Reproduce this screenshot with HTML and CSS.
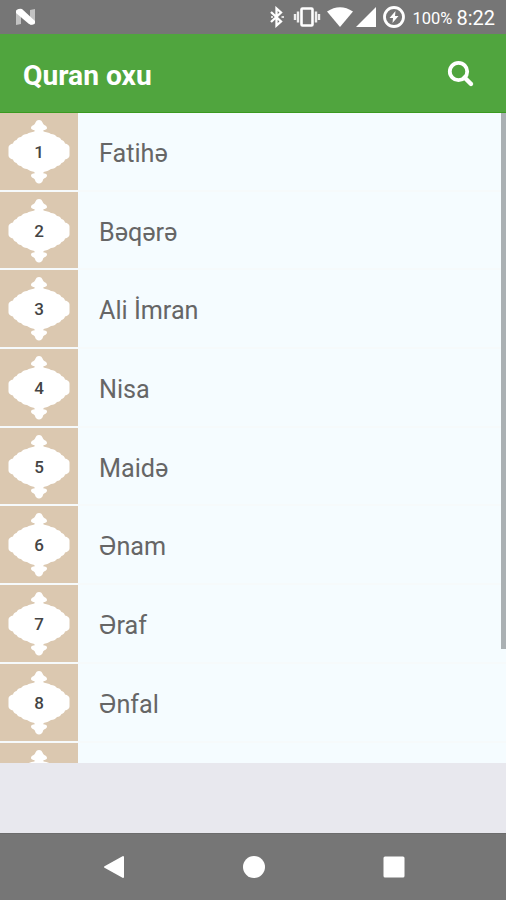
FILE: index.html
```html
<!DOCTYPE html>
<html lang="az">
<head>
  <meta charset="UTF-8">
  <meta name="viewport" content="width=device-width, initial-scale=1.0">
  <title>Quran oxu</title>
  <link rel="stylesheet" href="styles.css">
</head>
<body>

  <!-- Shared ornament shape -->
  <svg class="defs" width="0" height="0">
    <symbol id="ornament" viewBox="0 0 78 77">
      <path d="M39 7C41 7 42 8 43 10.500C44 12.500 47 12.500 47 15C47 16.500 45 17 43.500 17V18.500C46 19 49 19.500 51 21C53.500 21 55.500 22 57 24C59 24 60.500 25 61.500 27C63.500 27.500 64.500 28.500 65 30.500C67.500 31 69.500 32.500 69.500 34.500V42.500C69.500 44.500 67.500 46 65 46.500C64.500 48.500 63.500 49.500 61.500 50C60.500 52 59 53 57 53C55.500 55 53.500 56 51 56C49 57.500 46 58.500 43.500 59V60.500C45.500 60.500 47 61 47 62.500C47 65 43.500 65 43 67C42.500 69 41 70.500 39 70.500S35.500 69 35 67C34.500 65 31 65 31 62.500C31 61 32.500 60.500 34.500 60.500V59C32 58.500 29 57.500 27 56C24.500 56 22.500 55 21 53C19 53 17.500 52 16.500 50C14.500 49.500 13.500 48.500 13 46.500C10.500 46 8.500 44.500 8.500 42.500V34.500C8.500 32.500 10.500 31 13 30.500C13.500 28.500 14.500 27.500 16.500 27C17.500 25 19 24 21 24C22.500 22 24.500 21 27 21C29 19.500 32 19 34.500 18.500V17C33 17 31 16.500 31 15C31 12.500 34 12.500 35 10.500C36 8 37 7 39 7Z" fill="#fff"/>
    </symbol>
  </svg>

  <div class="status-bar">
    <svg class="logo" width="22" height="18" viewBox="0 0 22 18">
      <path d="M1 2L6 1V16L1 17ZM15 2L20 1V16L15 17Z" fill="#c2c2c2"/>
      <path d="M1 3Q3 0 7 1L20 13V15Q18 18 14 16L1 5Z" fill="#fff"/>
    </svg>
    <div class="status-icons">
      <svg class="bluetooth" width="16" height="22" viewBox="0 0 16 22">
        <path d="M2 6L12 15.500L7.500 19.500V2.500L12 6.500L2 16" fill="none" stroke="#fff" stroke-width="2.300"/>
        <path d="M12.500 11H15M2 11H4" stroke="#ddd" stroke-width="2"/>
      </svg>
      <svg class="vibrate" width="28" height="22" viewBox="0 0 28 22">
        <rect x="8.500" y="2.500" width="11" height="17" rx="1" fill="none" stroke="#fff" stroke-width="2.600"/>
        <path d="M5 5.500V16.500M2 8V14M23 5.500V16.500M26 8V14" stroke="#eee" stroke-width="2.400"/>
      </svg>
      <svg class="wifi" width="26" height="20" viewBox="0 0 26 20">
        <path d="M0 4.500Q13 -4 26 4.500L13 20Z" fill="#fff"/>
      </svg>
      <svg class="signal" width="20" height="20" viewBox="0 0 20 20">
        <path d="M20 0V20H0Z" fill="#fff"/>
      </svg>
      <svg class="battery" width="22" height="22" viewBox="0 0 22 22">
        <circle cx="11" cy="11" r="9.500" fill="none" stroke="#fff" stroke-width="2.800"/>
        <path d="M12.500 5L6.500 12H10L9.500 17L15.500 10H12Z" fill="#fff"/>
      </svg>
      <span class="percent">100%</span>
      <span class="clock">8:22</span>
    </div>
  </div>

  <header>
    <h1>Quran oxu</h1>
    <svg width="28" height="28" viewBox="0 0 28 28">
      <circle cx="11.500" cy="11.500" r="8.700" fill="none" stroke="#fff" stroke-width="3.800"/>
      <path d="M17.500 17.500L24 24" stroke="#fff" stroke-width="4.400" stroke-linecap="round"/>
    </svg>
  </header>

  <main>
    <ul class="surah-list">
      <li><div class="badge"><svg><use href="#ornament"/></svg><span>1</span></div><p>Fatihə</p></li>
      <li><div class="badge"><svg><use href="#ornament"/></svg><span>2</span></div><p>Bəqərə</p></li>
      <li><div class="badge"><svg><use href="#ornament"/></svg><span>3</span></div><p>Ali İmran</p></li>
      <li><div class="badge"><svg><use href="#ornament"/></svg><span>4</span></div><p>Nisa</p></li>
      <li><div class="badge"><svg><use href="#ornament"/></svg><span>5</span></div><p>Maidə</p></li>
      <li><div class="badge"><svg><use href="#ornament"/></svg><span>6</span></div><p>Ənam</p></li>
      <li><div class="badge"><svg><use href="#ornament"/></svg><span>7</span></div><p>Əraf</p></li>
      <li><div class="badge"><svg><use href="#ornament"/></svg><span>8</span></div><p>Ənfal</p></li>
      <li><div class="badge"><svg><use href="#ornament"/></svg></div></li>
    </ul>
    <div class="scrollbar"></div>
  </main>

  <div class="ad-space"></div>

  <nav>
    <svg width="22" height="24" viewBox="0 0 22 24">
      <path d="M20 2V22L2 12Z" fill="#fff" stroke="#fff" stroke-width="2" stroke-linejoin="round"/>
    </svg>
    <svg width="22" height="22" viewBox="0 0 22 22">
      <circle cx="11" cy="11" r="11" fill="#fff"/>
    </svg>
    <svg width="22" height="22" viewBox="0 0 22 22">
      <rect x="0.500" y="0.500" width="21" height="21" rx="1.500" fill="#fff"/>
    </svg>
  </nav>

</body>
</html>
```

FILE: styles.css
```css
* {
  box-sizing: border-box;
}

body {
  display: flex;
  flex-direction: column;
  height: 900px;
  margin: 0;
  overflow: hidden;
  font-family: Roboto, sans-serif;
  background: #e8e8ee;
}

svg {
  display: block;
  flex: none;
}

.defs {
  position: absolute;
}

.status-bar {
  display: flex;
  align-items: center;
  justify-content: space-between;
  height: 34px;
  padding: 0 11px 0 15px;
  background: #767676;
  color: #fff;
}

.status-icons {
  display: flex;
  align-items: center;
}

.vibrate {
  margin-left: 8px;
}

.wifi {
  margin-left: 6px;
}

.signal {
  margin-left: 3px;
}

.battery {
  margin-left: 7px;
}

.percent {
  margin: 3px 0 0 8px;
  font-size: 16.5px;
  line-height: 20px;
}

.clock {
  margin: 2px 0 0 4px;
  font-size: 20px;
  line-height: 22px;
}

header {
  display: flex;
  align-items: center;
  justify-content: space-between;
  height: 79px;
  padding: 2px 31px 0 23px;
  background: #50a53e;
  border-bottom: 1px solid #3a9a20;
  color: #fff;
}

h1 {
  margin: 2px 0 0;
  font-size: 28.2px;
  font-weight: 700;
}

main {
  position: relative;
  height: 649.5px;
  overflow: hidden;
  background: #f5fcff;
}

.surah-list {
  margin: 0;
  padding: 0;
  list-style: none;
}

.surah-list li {
  display: flex;
  height: 78.7px;
  border-bottom: 2px solid #f6fafb;
}

.badge {
  display: grid;
  place-items: center;
  width: 78px;
  height: 100%;
  background: #dbc8b0;
  color: #444;
  font-size: 17px;
  font-weight: 500;
}

.badge svg,
.badge span {
  grid-area: 1 / 1;
}

.badge svg {
  width: 78px;
  height: 77px;
}

.badge span {
  margin-top: 1px;
}

.surah-list p {
  margin: 0;
  padding: 2px 0 0 21px;
  color: #666;
  font-size: 25.2px;
  line-height: 77px;
}

.scrollbar {
  position: absolute;
  top: 0;
  right: 0;
  width: 5px;
  height: 536px;
  background: #aab0b3;
}

.ad-space {
  flex: 1;
}

nav {
  display: flex;
  align-items: center;
  justify-content: space-between;
  height: 67px;
  padding: 0 101px 0 103px;
  background: #767676;
  border-top: 1px solid #6c6c6c;
}
```
